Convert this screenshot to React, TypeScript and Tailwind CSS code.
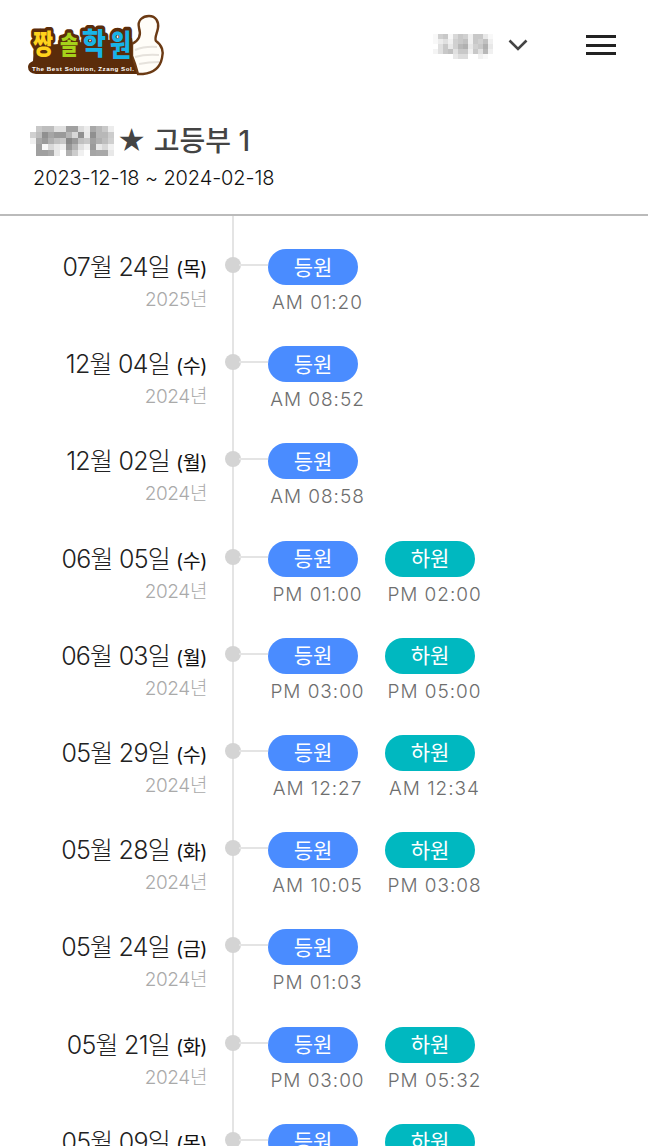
import React from "react";

const titleMosaic = [
  ["#fff", "#c8c8c8", "#bdbdbd", "#bdbdbd", "#e0e0e0", "#e0e0e0", "#a0a0a0", "#a0a0a0", "#dcdcdc", "#ececec", "#a8a8a8", "#b8b8b8", "#c8c8c8", "#ececec"],
  ["#d0d0d0", "#bdbdbd", "#909090", "#a5a5a5", "#9a9a9a", "#9a9a9a", "#b5b5b5", "#d8d8d8", "#909090", "#e8e8e8", "#909090", "#b8b8b8", "#b8b8b8", "#cccccc"],
  ["#f0f0f0", "#a8a8a8", "#9a9a9a", "#b0b0b0", "#c0c0c0", "#c8c8c8", "#888888", "#9a9a9a", "#c0c0c0", "#c8c8c8", "#a0a0a0", "#b0b0b0", "#bdbdbd", "#d0d0d0"],
  ["#fff", "#a0a0a0", "#f8f8f8", "#d8d8d8", "#e8e8e8", "#f0f0f0", "#989898", "#b5b5b5", "#e0e0e0", "#f0f0f0", "#9a9a9a", "#e8e8e8", "#d8d8d8", "#f0f0f0"],
  ["#fff", "#a0a0a0", "#a0a0a0", "#a8a8a8", "#e8e8e8", "#fff", "#b0b0b0", "#cccccc", "#f0f0f0", "#fff", "#a5a5a5", "#a8a8a8", "#a8a8a8", "#e8e8e8"],
];

const nameMosaic = [
  ["#f8f8f8", "#d0d0d0", "#c8c8c8", "#f8f8f8", "#d8d8d8", "#c8c8c8", "#d0d0d0", "#f0f0f0", "#c8c8c8", "#c8c8c8", "#e8e8e8", "#f8f8f8"],
  ["#f8f8f8", "#ececec", "#e0e0e0", "#f0f0f0", "#d0d0d0", "#c8c8c8", "#c0c0c0", "#f0f0f0", "#c8c8c8", "#d0d0d0", "#c0c0c0", "#f0f0f0"],
  ["#fff", "#e0e0e0", "#c8c8c8", "#e8e8e8", "#d0d0d0", "#b8b8b8", "#b0b0b0", "#e8e8e8", "#d0d0d0", "#c8c8c8", "#b0b0b0", "#e8e8e8"],
  ["#f4f4f4", "#e0e0e0", "#c8c8c8", "#c0c0c0", "#e0e0e0", "#c8c8c8", "#c8c8c8", "#f0f0f0", "#c8c8c8", "#e0e0e0", "#b8b8b8", "#f0f0f0"],
  ["#fff", "#fff", "#fff", "#fff", "#e8e8e8", "#dcdcdc", "#dcdcdc", "#fff", "#fff", "#f0f0f0", "#f8f8f8", "#fff"],
];

function Mosaic({ cells, cw, ch }: { cells: string[][]; cw: number; ch: number }) {
  return (
    <svg width={cells[0].length * cw} height={cells.length * ch} className="block shrink-0" shapeRendering="crispEdges">
      {cells.flatMap((row, y) =>
        row.map((c, x) => <rect key={`${x}-${y}`} x={x * cw} y={y * ch} width={cw} height={ch} fill={c} />)
      )}
    </svg>
  );
}

function Logo() {
  const brown = "#5b2c0a";
  const f: React.CSSProperties = {
    fontFamily: '"Noto Sans CJK KR", sans-serif',
    fontWeight: 900,
    paintOrder: "stroke",
    strokeLinejoin: "round",
  };
  return (
    <svg width="150" height="70" viewBox="20 10 150 70" className="block">
      <path
        d="M34 46 L132 38 L136 62 L142 74 L36 74 Q28 73 28 67 Q28 63 33 61 Z"
        fill={brown}
      />
      <path
        d="M132 44 C140 40 141 34 139 28 C137 20 143 16 149 16 C156 16 159 22 158 28 C157 34 154 38 156 41 C162 45 164 52 162 58 C160 68 153 73 143 74 L138 74 L135 64 L132 56 Z"
        fill="#fffdf8"
        stroke="#6b3a14"
        strokeWidth="2.4"
      />
      <path d="M135 50 Q145 46 157 47 M135 57 Q145 54 159 55 M139 64 Q149 62 159 62" fill="none" stroke="#e6e2dc" strokeWidth="2" />
      <text transform="translate(33 54) scale(0.95 1.2)" fontSize="23" fill="#ffd21c" stroke={brown} strokeWidth="6" style={f}>짱</text>
      <text transform="translate(60 54) scale(0.9 1.15)" fontSize="22" fill="#a6d21a" stroke={brown} strokeWidth="6" style={f}>솔</text>
      <text transform="translate(82 54) scale(1 1.15)" fontSize="26" fill="#18b4e8" stroke={brown} strokeWidth="6" style={f}>학</text>
      <text transform="translate(110 56) scale(0.95 1.25)" fontSize="24" fill="#18b4e8" stroke={brown} strokeWidth="6" style={f}>원</text>
      <text x="32" y="71" fontSize="6.2" fill="#fff" style={{ fontFamily: '"Liberation Sans", sans-serif', fontWeight: 700 }} textLength="102">
        The Best Solution, Zzang Sol.
      </text>
    </svg>
  );
}

type Row = { md: string; wd: string; y: string; in: string; out?: string };

const rows: Row[] = [
  { md: "07월 24일", wd: "(목)", y: "2025년", in: "AM 01:20" },
  { md: "12월 04일", wd: "(수)", y: "2024년", in: "AM 08:52" },
  { md: "12월 02일", wd: "(월)", y: "2024년", in: "AM 08:58" },
  { md: "06월 05일", wd: "(수)", y: "2024년", in: "PM 01:00", out: "PM 02:00" },
  { md: "06월 03일", wd: "(월)", y: "2024년", in: "PM 03:00", out: "PM 05:00" },
  { md: "05월 29일", wd: "(수)", y: "2024년", in: "AM 12:27", out: "AM 12:34" },
  { md: "05월 28일", wd: "(화)", y: "2024년", in: "AM 10:05", out: "PM 03:08" },
  { md: "05월 24일", wd: "(금)", y: "2024년", in: "PM 01:03" },
  { md: "05월 21일", wd: "(화)", y: "2024년", in: "PM 03:00", out: "PM 05:32" },
  { md: "05월 09일", wd: "(목)", y: "2024년", in: "PM 03:00", out: "PM 05:00" },
];

function Stamp({ label, time, color }: { label: string; time: string; color: string }) {
  return (
    <div className="w-[117px] flex flex-col">
      <div className={`shrink-0 ml-[9px] w-[90px] h-[36px] rounded-[18px] flex items-center justify-center text-white text-[21px] leading-none ${color}`}>
        {label}
      </div>
      <div className="mt-[5px] text-center text-[19px] leading-[26px] font-light tracking-[0.05em] text-[#6e6e6e]">{time}</div>
    </div>
  );
}

export default function App() {
  return (
    <div className="w-[648px] h-[1146px] overflow-hidden bg-white font-['Inter','Noto_Sans_CJK_KR',sans-serif]">
      <header className="h-[90px] flex items-start pt-[10px] pl-[20px]">
        <Logo />
        <div className="ml-[265px] mt-[24px] -translate-x-[2px]">
          <Mosaic cells={nameMosaic} cw={5} ch={5} />
        </div>
        <svg width="20" height="12" viewBox="0 0 20 12" className="ml-[13px] mt-[29px] block" fill="none" stroke="#444" strokeWidth="2.6">
          <path d="M1.5 1.5 L10 10 L18.5 1.5" />
        </svg>
        <div className="ml-[58px] mt-[25px] w-[30px] flex flex-col gap-[5.5px]">
          <div className="h-[3px] bg-[#222]" />
          <div className="h-[3px] bg-[#222]" />
          <div className="h-[3px] bg-[#222]" />
        </div>
      </header>

      <section className="h-[126px] border-b-2 border-[#bbbbbb] pt-[33px]">
        <div className="flex items-center h-[36px] ml-[30px]">
          <Mosaic cells={titleMosaic} cw={6} ch={6} />
          <span className="ml-[3px] text-[28px] leading-none font-medium text-[#444] whitespace-nowrap">★ 고등부 1</span>
        </div>
        <div className="ml-[33px] mt-[4px] text-[20px] leading-[30px] font-light tracking-[-0.1px] text-[#111]">2023-12-18 ~ 2024-02-18</div>
      </section>

      <main>
        {rows.map((r) => (
          <div key={r.md} className="flex h-[97.2px]">
            <div className="w-[207px] shrink-0 flex flex-col items-end pt-[31px]">
              <div className="flex items-baseline leading-[40px] whitespace-nowrap text-[#222]">
                <span className="text-[25px] font-light tracking-[-0.03em]">{r.md}</span>
                <span className="ml-[6px] text-[19.5px] tracking-[-0.02em] text-[#111]">{r.wd}</span>
              </div>
              <div className="text-[19px] leading-[24px] -mt-[1px] font-light tracking-[-0.02em] text-[#aaaaaa]">{r.y}</div>
            </div>
            <div className="relative w-[52px] shrink-0">
              <div className="absolute left-[25px] top-0 bottom-0 w-[2px] bg-[#e4e4e4]" />
              <div className="absolute left-[18px] top-[41px] w-[16px] h-[16px] rounded-full bg-[#d4d4d4]" />
              <div className="absolute left-[32px] top-[48px] w-[29px] h-[2px] bg-[#e4e4e4]" />
            </div>
            <div className="flex pt-[33px] -mr-[1px]">
              <Stamp label="등원" time={r.in} color="bg-[#4a8cff]" />
              {r.out && <Stamp label="하원" time={r.out} color="bg-[#00b8c0]" />}
            </div>
          </div>
        ))}
      </main>
    </div>
  );
}
